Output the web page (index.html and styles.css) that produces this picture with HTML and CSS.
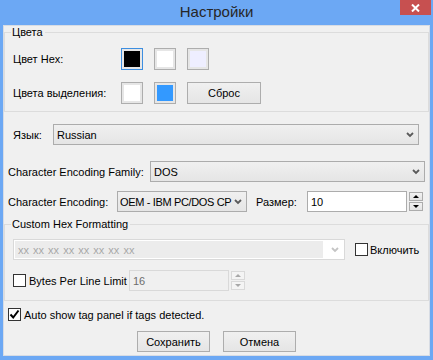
FILE: index.html
```html
<!DOCTYPE html>
<html>

<head>
    <title>Настройки</title>
    <link rel="stylesheet" href="styles.css">
</head>

<body>
    <div class="window">
        <div class="titlebar">
            <span class="title">Настройки</span>
            <div class="close">
                <svg width="9" height="8" viewBox="0 0 9 8">
                    <path d="M1 0.5 L8 7.5 M8 0.5 L1 7.5" stroke="#fff" stroke-width="2" fill="none" />
                </svg>
            </div>
        </div>

        <div class="client">
            <fieldset class="group group-colors">
                <legend>Цвета</legend>
                <div class="color-row">
                    <span class="color-label">Цвет Hex:</span>
                    <span class="swatch focused"><i class="fill-black"></i></span>
                    <span class="swatch"><i class="fill-white"></i></span>
                    <span class="swatch"><i class="fill-lavender"></i></span>
                </div>
                <div class="color-row">
                    <span class="color-label">Цвета выделения:</span>
                    <span class="swatch"><i class="fill-white"></i></span>
                    <span class="swatch"><i class="fill-blue"></i></span>
                    <span class="btn btn-reset">Сброс</span>
                </div>
            </fieldset>

            <div class="form-row lang-row">
                <span class="lang-label">Язык:</span>
                <div class="combo lang-combo">
                    <span class="combo-text">Russian</span>
                    <svg class="chevron" width="8" height="6" viewBox="0 0 8 6">
                        <polyline points="1,1 4,4 7,1" stroke="#5a5a5a" stroke-width="1.8" fill="none" />
                    </svg>
                </div>
            </div>

            <div class="form-row family-row">
                <span class="family-label">Character Encoding Family:</span>
                <div class="combo family-combo">
                    <span class="combo-text">DOS</span>
                    <svg class="chevron" width="8" height="6" viewBox="0 0 8 6">
                        <polyline points="1,1 4,4 7,1" stroke="#5a5a5a" stroke-width="1.8" fill="none" />
                    </svg>
                </div>
            </div>

            <div class="form-row enc-row">
                <span class="enc-label">Character Encoding:</span>
                <div class="combo enc-combo">
                    <span class="combo-text">OEM - IBM PC/DOS CP</span>
                    <svg class="chevron" width="8" height="6" viewBox="0 0 8 6">
                        <polyline points="1,1 4,4 7,1" stroke="#5a5a5a" stroke-width="1.8" fill="none" />
                    </svg>
                </div>
                <span class="size-label">Размер:</span>
                <div class="num-input">10</div>
                <div class="spin">
                    <span class="spin-btn up"></span>
                    <span class="spin-btn down"></span>
                </div>
            </div>

            <fieldset class="group group-hex">
                <legend>Custom Hex Formatting</legend>
                <div class="form-row hex-row">
                    <div class="combo disabled hex-combo">
                        <span class="combo-field">xx xx xx xx xx xx xx xx</span>
                        <svg class="chevron" width="8" height="6" viewBox="0 0 8 6">
                            <polyline points="1,1 4,4 7,1" stroke="#c4c4c4" stroke-width="1.8" fill="none" />
                        </svg>
                    </div>
                    <span class="checkbox enable-check"></span>
                    <span class="check-text">Включить</span>
                </div>
                <div class="form-row bytes-row">
                    <span class="checkbox"></span>
                    <span class="check-text bytes-text">Bytes Per Line Limit</span>
                    <div class="num-input disabled">16</div>
                    <div class="spin disabled">
                        <span class="spin-btn up"></span>
                        <span class="spin-btn down"></span>
                    </div>
                </div>
            </fieldset>

            <div class="auto-row">
                <span class="checkbox checked">
                    <svg width="11" height="11" viewBox="0 0 11 11">
                        <path d="M1.5 5.5 L4.2 8.5 L9.5 1.5" stroke="#000" stroke-width="2" fill="none" />
                    </svg>
                </span>
                <span class="check-text">Auto show tag panel if tags detected.</span>
            </div>

            <div class="buttons">
                <span class="btn btn-dialog">Сохранить</span>
                <span class="btn btn-dialog">Отмена</span>
            </div>
        </div>
    </div>
</body>

</html>
```

FILE: styles.css
```css
body {
    margin: 0;
    font-family: "Liberation Sans", Arial, sans-serif;
    font-size: 11px;
    color: #000;
    white-space: nowrap;
    background-color: #6ca8f4;
}

.window {
    width: 433px;
    height: 360px;
    background-color: #6ca8f4;
}

.titlebar {
    height: 25px;
    display: grid;
    grid-template-columns: 1fr auto 1fr;
}

.title {
    grid-column: 2;
    font-size: 15px;
    line-height: 23px;
    color: #262626;
}

.close {
    grid-column: 3;
    justify-self: end;
    align-self: start;
    width: 31px;
    height: 15px;
    margin-right: 2px;
    background-color: #c75050;
    display: flex;
    align-items: center;
    justify-content: center;
}

.client {
    margin-left: 3px;
    width: 425px;
    height: 329px;
    border: 1px solid #d7dce4;
    background-color: #f0f0f0;
}

/* group boxes */
.group {
    margin: 0;
    border: 1px solid #dcdcdc;
    min-width: 0;
}

.group legend {
    padding: 0 2px 0 1px;
    margin-left: -2px;
    line-height: 13px;
}

.group-colors {
    padding: 9px 8px 7px;
}

.group-hex {
    margin-top: 6px;
    padding: 8px 8px 9px;
}

/* colours */
.color-row {
    display: flex;
    align-items: center;
    height: 22px;
}

.color-row + .color-row {
    margin-top: 12px;
}

.color-label {
    width: 108px;
}

.swatch {
    box-sizing: border-box;
    width: 22px;
    height: 22px;
    margin-right: 11px;
    border: 1px solid #adadad;
    padding: 2px;
    background-color: #e6e6e6;
    display: flex;
}

.swatch i {
    flex: 1;
}

.swatch.focused {
    border-color: #3d8ee0;
}

.fill-black { background-color: #000; }
.fill-white { background-color: #fff; }
.fill-lavender { background-color: #eeeeff; }
.fill-blue { background-color: #3399ff; }

.btn {
    box-sizing: border-box;
    border: 1px solid #adadad;
    background: linear-gradient(#f0f0f0, #e5e5e5);
    display: flex;
    align-items: center;
    justify-content: center;
}

.btn-reset {
    width: 74px;
    height: 22px;
}

/* rows */
.form-row {
    display: flex;
    align-items: center;
    height: 21px;
}

.lang-row {
    margin-top: 12px;
    padding-left: 9px;
}

.lang-label {
    width: 40px;
}

.family-row {
    margin-top: 16px;
    padding-left: 4px;
}

.family-label {
    width: 142px;
}

.enc-row {
    margin-top: 9px;
    padding-left: 4px;
}

.enc-label {
    width: 109px;
}

.size-label {
    width: 51px;
    margin-left: 9px;
}

/* combo boxes */
.combo {
    box-sizing: border-box;
    height: 21px;
    border: 1px solid #acacac;
    background: linear-gradient(#f0f0f0, #e5e5e5);
    display: flex;
    align-items: center;
    padding: 0 4px 0 3px;
}

.combo-text {
    flex: 1;
    overflow: hidden;
}

.chevron {
    flex: none;
}

.lang-combo {
    width: 366px;
}

.family-combo {
    width: 275px;
}

.enc-combo {
    width: 130px;
    padding-left: 2px;
}

.enc-combo .combo-text {
    letter-spacing: -0.35px;
}

.combo.disabled {
    width: 332px;
    border-color: #d9d9d9;
    background: #fff;
    padding: 1px 5px 1px 1px;
}

.combo-field {
    flex: 1;
    align-self: stretch;
    display: flex;
    align-items: center;
    padding-left: 3px;
    margin-right: 8px;
    background-color: #ececec;
    color: #a8a8a8;
    word-spacing: 1px;
}

/* number inputs */
.num-input {
    box-sizing: border-box;
    width: 100px;
    height: 21px;
    border: 1px solid #acacac;
    background-color: #fff;
    padding-left: 3px;
    display: flex;
    align-items: center;
}

.num-input.disabled {
    border-color: #d9d9d9;
    background-color: #f0f0f0;
    color: #6d6d6d;
}

.spin {
    display: flex;
    flex-direction: column;
    justify-content: space-between;
    width: 14px;
    height: 19px;
    margin-left: 2px;
}

.spin-btn {
    box-sizing: border-box;
    height: 9px;
    border: 1px solid #acacac;
    background: linear-gradient(#f2f2f2, #e3e3e3);
    display: flex;
    align-items: center;
    justify-content: center;
}

.spin-btn.up::after {
    content: "";
    border-left: 3px solid transparent;
    border-right: 3px solid transparent;
    border-bottom: 3px solid #000;
}

.spin-btn.down::after {
    content: "";
    border-left: 3px solid transparent;
    border-right: 3px solid transparent;
    border-top: 3px solid #000;
}

.spin.disabled .spin-btn {
    border-color: #d9d9d9;
    background: #f4f4f4;
}

.spin.disabled .spin-btn.up::after {
    border-bottom-color: #a8a8a8;
}

.spin.disabled .spin-btn.down::after {
    border-top-color: #a8a8a8;
}

/* checkboxes */
.checkbox {
    flex: none;
    box-sizing: border-box;
    width: 13px;
    height: 13px;
    border: 1px solid #333;
    background-color: #fff;
    display: flex;
    align-items: center;
    justify-content: center;
}

.check-text {
    margin-left: 3px;
}

.hex-row .check-text {
    margin-left: 2px;
}

.enable-check {
    margin-left: 10px;
}

.bytes-row {
    margin-top: 10px;
}

.bytes-text {
    width: 100px;
}

.auto-row {
    margin-top: 7px;
    padding-left: 4px;
    height: 13px;
    display: flex;
    align-items: center;
}

/* dialog buttons */
.buttons {
    margin-top: 10px;
    display: flex;
    justify-content: center;
    gap: 13px;
}

.btn-dialog {
    width: 73px;
    height: 21px;
}
```
